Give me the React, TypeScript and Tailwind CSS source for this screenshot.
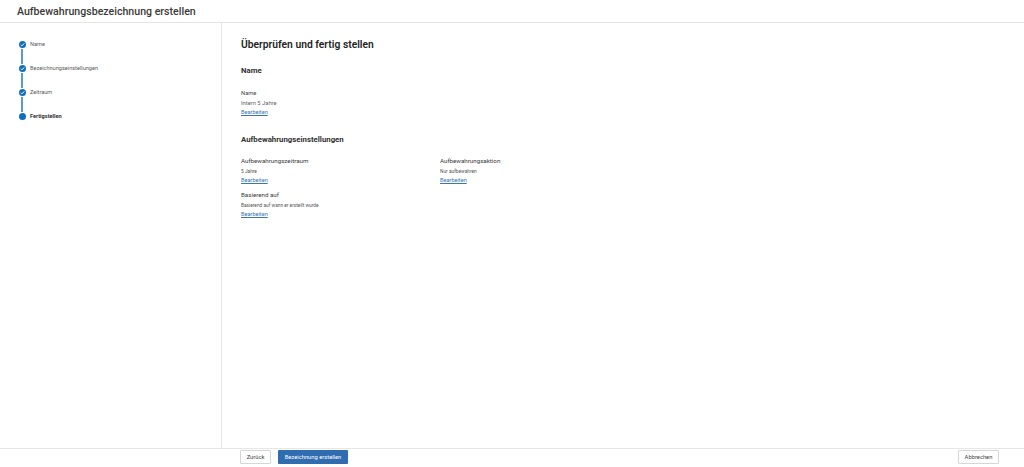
const font = { fontFamily: 'Roboto, "Noto Sans", sans-serif' };

const steps = [
  { label: "Name", done: true },
  { label: "Bezeichnungseinstellungen", done: true },
  { label: "Zeitraum", done: true },
  { label: "Fertigstellen", done: false },
];

function Step({ label, done, last }: { label: string; done: boolean; last: boolean }) {
  return (
    <div className="flex h-6 gap-[4.5px]">
      <div className="flex w-[7px] flex-col items-center">
        <div className="flex h-[7px] w-[7px] shrink-0 items-center justify-center rounded-full bg-[#106ebe]">
          {done && (
            <svg viewBox="0 0 8 8" className="h-[7px] w-[7px]" fill="none" stroke="#ffffff" strokeWidth="1">
              <path d="M2 4.2 3.4 5.6 6 2.6" />
            </svg>
          )}
        </div>
        {!last && <div className="mt-[1px] h-[15px] w-[1.5px] bg-[#5a9ad2]" />}
      </div>
      <span
        className={`-mt-[2px] text-[5.6px] leading-[11px] ${
          done ? "text-[#5a5a5a]" : "font-bold text-[#323130]"
        }`}
      >
        {label}
      </span>
    </div>
  );
}

function EditLink() {
  return <a className="block text-[5.6px] leading-[9px] text-[#3a76b5] underline">Bearbeiten</a>;
}

function Field({ title, value }: { title: string; value: string }) {
  return (
    <div>
      <div className="text-[6.2px] leading-[9px] text-[#3a3a3a]">{title}</div>
      <div className="mt-[2px] text-[4.8px] leading-[8px] text-[#555555]">{value}</div>
      <EditLink />
    </div>
  );
}

export default function App() {
  return (
    <div style={font} className="flex h-[467px] w-[1024px] flex-col overflow-hidden bg-white">
      <header className="h-[23px] shrink-0 border-b border-[#e6e6e6] pl-[17px] pt-[1px]">
        <h1 className="text-[10.6px] font-medium leading-[21px] text-[#3b3a39]">
          Aufbewahrungsbezeichnung erstellen
        </h1>
      </header>

      <div className="flex min-h-0 flex-1">
        <aside className="w-[222px] shrink-0 border-r border-[#e6e6e6] pl-[18.5px] pt-[18px]">
          {steps.map((s, i) => (
            <Step key={s.label} label={s.label} done={s.done} last={i === steps.length - 1} />
          ))}
        </aside>

        <main className="flex-1 pl-[19px] pt-[15px]">
          <h2 className="text-[10.3px] font-semibold leading-[14px] text-[#242424]">Überprüfen und fertig stellen</h2>

          <h3 className="mt-[14px] text-[7.8px] font-bold leading-[10px] text-[#323130]">Name</h3>
          <div className="mt-[13px] text-[5.8px] leading-[9px] text-[#444444]">Name</div>
          <div className="mt-[1px] text-[5.8px] leading-[9px] text-[#666666]">Intern 5 Jahre</div>
          <EditLink />

          <h3 className="mt-[18px] text-[7.8px] font-bold leading-[10px] text-[#323130]">
            Aufbewahrungseinstellungen
          </h3>

          <div className="mt-[12px] grid w-[398px] grid-cols-2 gap-y-[6px]">
            <Field title="Aufbewahrungszeitraum" value="5 Jahre" />
            <Field title="Aufbewahrungsaktion" value="Nur aufbewahren" />
            <Field title="Basierend auf" value="Basierend auf wann er erstellt wurde" />
          </div>
        </main>
      </div>

      <footer className="flex h-[19px] shrink-0 items-start border-t border-[#e6e6e6] pl-[240px] pr-[25px] pt-[1px]">
        <button className="h-[14px] w-[31px] rounded-[1px] border border-[#d6d6d6] bg-white text-[5.8px] text-[#444444]">
          Zurück
        </button>
        <button className="ml-[7px] h-[14px] w-[70px] rounded-[1px] bg-[#2f6cb0] text-[5.8px] text-white">
          Bezeichnung erstellen
        </button>
        <button className="ml-auto h-[14px] w-[41px] rounded-[1px] border border-[#d6d6d6] bg-white text-[5.8px] text-[#444444]">
          Abbrechen
        </button>
      </footer>
    </div>
  );
}
